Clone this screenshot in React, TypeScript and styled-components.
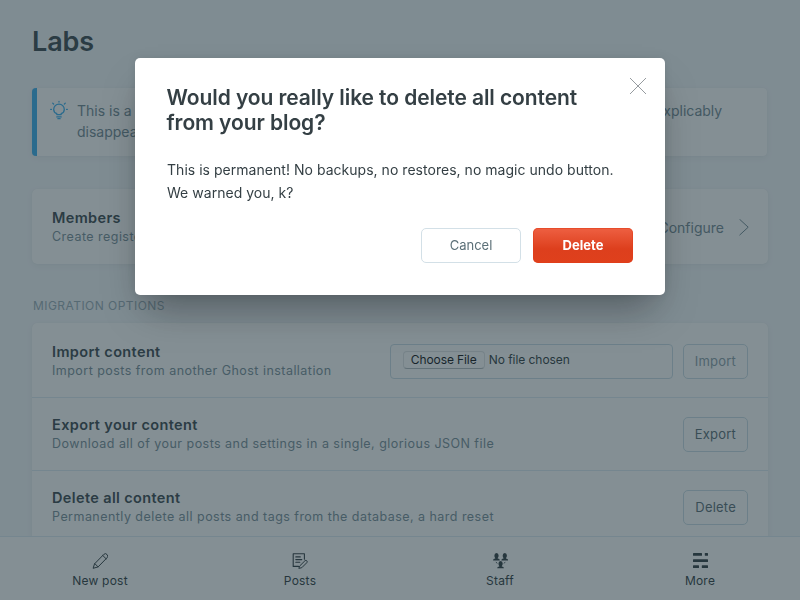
import React from 'react';
import styled, { createGlobalStyle, css } from 'styled-components';

const GlobalStyle = createGlobalStyle`
  *, *::before, *::after { box-sizing: border-box; }
  body {
    margin: 0;
    overflow: hidden;
    background: #f4f8fb;
    color: #343f44;
    font-family: Inter, "Liberation Sans", sans-serif;
    -webkit-font-smoothing: antialiased;
  }
  button { font-family: inherit; margin: 0; }
`;

const Page = styled.div`
  display: flex;
  flex-direction: column;
  height: 600px;
  overflow: hidden;
`;

const Content = styled.main`
  flex: 1;
  min-height: 0;
  overflow: hidden;
  padding: 26px 32px 0;
`;

const PageTitle = styled.h1`
  margin: 0;
  height: 62px;
  color: #3d4b51;
  font-size: 27px;
  font-weight: 600;
  line-height: 32px;
  letter-spacing: -0.1px;
`;

const cardShadow = css`
  box-shadow: 0 0 1px rgba(0, 0, 0, 0.08), 0 2px 7px rgba(0, 0, 0, 0.05);
`;

const Notice = styled.div`
  display: flex;
  height: 68px;
  margin-right: 1px;
  padding: 12px 18px 0 13px;
  border-left: 5px solid #3eb0ef;
  border-radius: 4px;
  background: #fff;
  ${cardShadow}
`;

const NoticeText = styled.p`
  margin: 0 0 0 8px;
  color: #738a94;
  font-size: 14px;
  line-height: 21px;
  white-space: nowrap;
`;

const Card = styled.section`
  padding-top: 2px;
  border-radius: 5px;
  background: #fff;
  ${cardShadow}
`;

const MembersCard = styled(Card)`
  margin-top: 33px;
`;

const SectionLabel = styled.h2`
  margin: 34px 0 10px 1px;
  color: #9baeb8;
  font-size: 12px;
  font-weight: 400;
  line-height: 15px;
  letter-spacing: 0.45px;
  text-transform: uppercase;
`;

const Row = styled.div<{ $divided?: boolean }>`
  display: flex;
  align-items: center;
  height: 73px;
  padding: 0 20px;
  border-bottom: ${p => (p.$divided ? '1px solid #dfecf3' : '0')};
`;

const RowText = styled.div`
  flex: 1;
  min-width: 0;
  white-space: nowrap;
`;

const RowTitle = styled.div`
  color: #3d4b51;
  font-size: 14.5px;
  font-weight: 600;
  line-height: 18px;
  letter-spacing: 0.37px;
`;

const RowDescription = styled.div`
  color: #7b919b;
  font-size: 12.5px;
  line-height: 19px;
  letter-spacing: 0.46px;
`;

const RowLink = styled.div`
  display: flex;
  align-items: center;
  gap: 15px;
  margin-right: -1px;
  color: #738a94;
  font-size: 14px;
`;

const FileField = styled.div`
  display: flex;
  align-items: flex-start;
  width: 283px;
  height: 35px;
  margin-right: 10px;
  padding: 6px 12px;
  border: 1px solid #cbdde6;
  border-radius: 4px;
  font-size: 12px;
  line-height: 18px;
  letter-spacing: -0.05px;
  color: #343f44;
`;

const ChooseButton = styled.button`
  width: 82px;
  height: 18px;
  margin-right: 4px;
  padding: 0;
  border: 1px solid #e2e5e7;
  border-bottom-color: #b4bbc0;
  border-radius: 4px;
  background: #fff;
  color: #15171a;
  font-size: 12px;
  line-height: 16px;
  letter-spacing: -0.1px;
`;

const Button = styled.button<{ $wide?: boolean; $faded?: boolean }>`
  height: 35px;
  width: ${p => (p.$wide ? '100px' : 'auto')};
  padding: 0 11px;
  border: 1px solid ${p => (p.$wide ? '#d3e0e7' : '#cbdde6')};
  border-radius: 5px;
  background: #fff;
  color: ${p => (p.$faded ? '#8da1ab' : '#5c7078')};
  font-size: 13px;
  line-height: 33px;
  letter-spacing: ${p => (p.$wide ? '0' : '0.22px')};
`;

const DangerButton = styled(Button)`
  border: 0;
  background: linear-gradient(#ee6042, #dd3f1d 60%, #df401c);
  box-shadow: inset 0 0 0 1px rgba(226, 60, 25, 0.55);
  color: #fff;
  font-weight: 700;
  line-height: 35px;
`;

const TabBar = styled.nav`
  display: grid;
  grid-template-columns: repeat(4, 1fr);
  height: 64px;
  border-top: 1px solid #dfecf3;
  background: #fff;
`;

const Tab = styled.a`
  display: flex;
  flex-direction: column;
  align-items: center;
  padding-top: 16px;
  color: #343f44;
  font-size: 12px;
  line-height: 15px;
  letter-spacing: 0.22px;
  svg { display: block; margin-bottom: 4px; }
`;

const Overlay = styled.div`
  position: fixed;
  inset: 0;
  display: flex;
  justify-content: center;
  align-items: flex-start;
  padding-top: 58px;
  background: rgba(27, 48, 57, 0.54);
`;

const Dialog = styled.div`
  position: relative;
  width: 530px;
  height: 237px;
  padding: 27px 32px 32px;
  border-radius: 5px;
  background: #fff;
  box-shadow: 0 0 8px rgba(0, 0, 0, 0.08), 0 22px 38px -10px rgba(0, 0, 0, 0.36);
`;

const DialogTitle = styled.h1`
  margin: 0 0 0 -0.5px;
  font-size: 21px;
  font-weight: 600;
  line-height: 25px;
  letter-spacing: -0.08px;
`;

const DialogText = styled.p`
  margin: 23px 0 0;
  font-size: 14px;
  line-height: 23px;
  letter-spacing: 0.03px;
`;

const DialogActions = styled.div`
  display: flex;
  justify-content: flex-end;
  gap: 12px;
  margin-top: 24px;
`;

const CloseButton = styled.button`
  position: absolute;
  top: 20px;
  right: 19px;
  width: 16px;
  height: 16px;
  padding: 0;
  border: 0;
  background: none;
  svg { display: block; }
`;

const BulbIcon = () => (
  <svg width="19" height="20" viewBox="0.500 0 19 20" fill="none" stroke="#3eb0ef" strokeWidth="1.3" strokeLinecap="round">
    <path d="M7.3 14.6v-.9C5.400 12.900 4.200 11.400 4.200 9.400a5.300 5.300 0 0 1 10.600 0c0 2-1.200 3.500-3.100 4.300v.9z" strokeLinejoin="round" />
    <path d="M7.300 16.900h4.400M8.400 18.700h2.200M9.500 1.400v.6M3.200 3.100l.9.900M15.800 3.100l-.9.900M1.200 9.400h.7M17.100 9.400h.7" />
  </svg>
);

const ChevronIcon = () => (
  <svg width="10" height="17" viewBox="0 0 10 17" fill="none" stroke="#738a94">
    <path d="M.5.2l8.700 8-8.700 8" />
  </svg>
);

const CloseIcon = () => (
  <svg width="16" height="16" viewBox="0 0 16 16" stroke="#7b8286" strokeWidth=".8">
    <path d="M0 0l16 16M16 0L0 16" />
  </svg>
);

const PencilIcon = () => (
  <svg width="16" height="16" viewBox="-1.200 0 16 16" fill="none" stroke="#343f44" strokeLinejoin="round" strokeLinecap="round">
    <path d="M1.600 10.600L10.500 1.500a2.200 2.200 0 0 1 3.300 0 2.200 2.200 0 0 1 0 3.300L4.900 13.900.3 15.200zM1.600 10.600l3.300 3.300M9.600 2.500l3.300 3.300" />
  </svg>
);

const PostsIcon = () => (
  <svg width="16" height="16" viewBox="0 0 16 16" fill="none" stroke="#343f44" strokeLinejoin="round" strokeLinecap="round">
    <path d="M6.500 13.400H1.200V.8h11.200v5.400M3.800 3.900h4.500M3.800 6.600h6M3.800 9.300h4" strokeWidth="1.100" />
    <path d="M7.900 12.800l5-5a1.300 1.300 0 0 1 1.900 1.900l-5 5-2.600.6z" />
  </svg>
);

const StaffIcon = () => (
  <svg width="16" height="16" viewBox="-.5 0 16 16" fill="#343f44">
    <path d="M1.900 2.600a2 2.400 0 0 1 4.200 0c0 1.300-.4 2-.9 2.400v.5c1.300.3 2.100.7 2.100 1.900H.6c0-1.200.8-1.600 2.100-1.900V5c-.5-.4-.8-1.100-.8-2.400z" />
    <path d="M10.200 2.600a2 2.400 0 0 1 4.200 0c0 1.300-.4 2-.9 2.400v.5c1.300.3 2.100.7 2.100 1.900H8.900c0-1.200.8-1.600 2.100-1.900V5c-.5-.4-.8-1.100-.8-2.400z" />
    <path d="M6 10.600a2 2.400 0 0 1 4.200 0c0 1.300-.4 2-.9 2.400v.4c1.300.3 2.100.7 2.100 1.900H4.700c0-1.200.8-1.600 2.100-1.900V13c-.5-.4-.8-1.100-.8-2.400z" />
    <path d="M3.500 8.900l1.200 1.600M12.700 8.900l-1.200 1.600" stroke="#343f44" strokeWidth=".8" />
  </svg>
);

const MoreIcon = () => (
  <svg width="16" height="16" viewBox="0 0 16 16" fill="#343f44">
    <rect x="1" y="0" width="9" height="2.800" rx=".5" />
    <rect x="12.800" y="0" width="3.200" height="2.800" rx=".5" />
    <rect x="1" y="6.200" width="15" height="2.800" rx=".5" />
    <rect x="1" y="12.300" width="6" height="2.800" rx=".5" />
    <rect x="9.800" y="12.300" width="6.200" height="2.800" rx=".5" />
  </svg>
);

const tabs = [
  { label: 'New post', Icon: PencilIcon },
  { label: 'Posts', Icon: PostsIcon },
  { label: 'Staff', Icon: StaffIcon },
  { label: 'More', Icon: MoreIcon },
];

export default function App() {
  return (
    <>
      <GlobalStyle />
      <Page>
        <Content>
          <PageTitle>Labs</PageTitle>
          <Notice>
            <BulbIcon />
            <NoticeText>
              This is a testing ground for new or experimental features. They may change, break or inexplicably
              <br />
              disappear at any time.
            </NoticeText>
          </Notice>
          <MembersCard>
            <Row>
              <RowText>
                <RowTitle>Members</RowTitle>
                <RowDescription>Create registered members for your site</RowDescription>
              </RowText>
              <RowLink>
                Configure
                <ChevronIcon />
              </RowLink>
            </Row>
          </MembersCard>
          <SectionLabel>Migration options</SectionLabel>
          <Card>
            <Row $divided>
              <RowText>
                <RowTitle>Import content</RowTitle>
                <RowDescription>Import posts from another Ghost installation</RowDescription>
              </RowText>
              <FileField>
                <ChooseButton>Choose File</ChooseButton>
                No file chosen
              </FileField>
              <Button $faded>Import</Button>
            </Row>
            <Row $divided>
              <RowText>
                <RowTitle>Export your content</RowTitle>
                <RowDescription>Download all of your posts and settings in a single, glorious JSON file</RowDescription>
              </RowText>
              <Button>Export</Button>
            </Row>
            <Row>
              <RowText>
                <RowTitle>Delete all content</RowTitle>
                <RowDescription>Permanently delete all posts and tags from the database, a hard reset</RowDescription>
              </RowText>
              <Button>Delete</Button>
            </Row>
          </Card>
        </Content>
        <TabBar>
          {tabs.map(({ label, Icon }) => (
            <Tab key={label}>
              <Icon />
              {label}
            </Tab>
          ))}
        </TabBar>
      </Page>
      <Overlay>
        <Dialog role="dialog">
          <DialogTitle>
            Would you really like to delete all content
            <br />
            from your blog?
          </DialogTitle>
          <DialogText>
            This is permanent! No backups, no restores, no magic undo button.
            <br />
            We warned you, k?
          </DialogText>
          <DialogActions>
            <Button $wide>Cancel</Button>
            <DangerButton $wide>Delete</DangerButton>
          </DialogActions>
          <CloseButton aria-label="Close">
            <CloseIcon />
          </CloseButton>
        </Dialog>
      </Overlay>
    </>
  );
}
